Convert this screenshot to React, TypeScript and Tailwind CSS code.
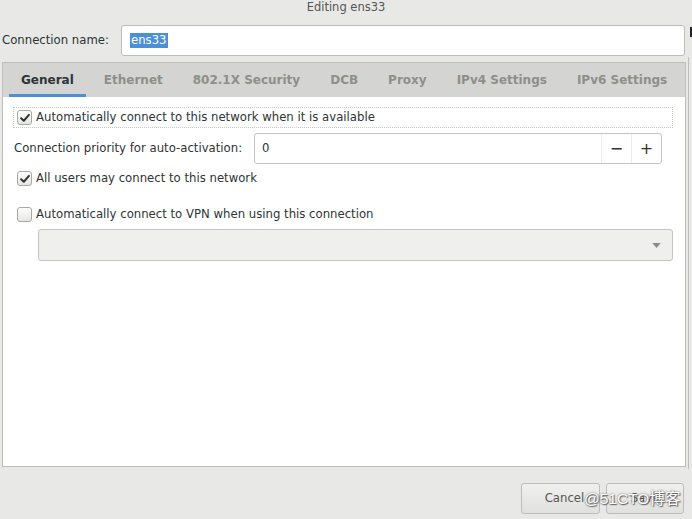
const tabs = ['General', 'Ethernet', '802.1X Security', 'DCB', 'Proxy', 'IPv4 Settings', 'IPv6 Settings'];

function CheckBox({ checked }: { checked: boolean }) {
    return (
        <span className="flex h-[15px] w-[15px] shrink-0 items-center justify-center rounded-[3px] border border-[#a8a8a5] bg-gradient-to-b from-[#fdfdfd] to-[#e6e6e4]">
            {checked && (
                <svg viewBox="0 0 14 14" className="h-[12px] w-[12px]">
                    <path d="M2.5 7.2 L5.6 10.2 L11.6 3.4" fill="none" stroke="#2e3436" strokeWidth="2.3" strokeLinecap="round" strokeLinejoin="round" />
                </svg>
            )}
        </span>
    );
}

export default function App() {
    return (
        <div className="relative flex h-[519px] w-[692px] flex-col overflow-hidden bg-[#e8e8e7] text-[11.7px] text-[#2e3436]" style={{ fontFamily: '"DejaVu Sans", "Noto Sans CJK SC", sans-serif' }}>
            <div className="flex h-[15px] items-center justify-center text-[11.5px] text-[#555753]">Editing ens33</div>

            <div className="mt-[10px] flex items-center pl-[2px] pr-[7px]">
                <span className="w-[119px]">Connection name:</span>
                <div className="flex h-[31px] flex-1 items-center rounded-[3px] border border-[#bcbcb9] bg-white pl-[8px]">
                    <span className="bg-[#4a90d9] px-px leading-[15px] text-white">ens33</span>
                </div>
            </div>

            <div className="ml-[2px] mr-[6px] mt-[6px] flex flex-1 flex-col border border-[#bdbdba]">
                <div className="flex h-[34px] items-stretch gap-[6px] bg-[#d4d4d2] pl-[6px]">
                    {tabs.map((t, i) => (
                        <div key={t} className={`flex items-center whitespace-nowrap border-b-[3px] px-[12px] pt-[2px] text-[12px] font-bold ${i === 0 ? 'border-[#4a90d9] text-[#2e3436]' : 'border-transparent text-[#8e8f8b]'}`}>
                            {t}
                        </div>
                    ))}
                </div>

                <div className="flex-1 bg-white pl-[10px] pr-[12px] pt-[10px]">
                    <div className="flex h-[21px] items-center gap-[4px] border border-dotted border-[#c5c5c2] pl-[3px]">
                        <CheckBox checked />
                        <span>Automatically connect to this network when it is available</span>
                    </div>

                    <div className="mt-[5px] flex items-center pl-px">
                        <span className="w-[240px]">Connection priority for auto-activation:</span>
                        <div className="mr-[11px] flex h-[31px] flex-1 rounded-[3px] border border-[#c4c4c1] bg-white">
                            <span className="flex flex-1 items-center pl-[7px]">0</span>
                            <span className="flex w-[30px] items-center justify-center border-l border-[#ececea] text-[16px]">−</span>
                            <span className="flex w-[30px] items-center justify-center border-l border-[#ececea] text-[16px]">+</span>
                        </div>
                    </div>

                    <div className="mt-[6px] flex items-center gap-[4px] pl-[4px]">
                        <CheckBox checked />
                        <span>All users may connect to this network</span>
                    </div>

                    <div className="mt-[18px] flex items-center gap-[4px] pl-[4px]">
                        <CheckBox checked={false} />
                        <span>Automatically connect to VPN when using this connection</span>
                    </div>

                    <div className="ml-[25px] mt-[6px] flex h-[32px] items-center justify-end rounded-[3px] border border-[#c4c4c1] bg-[#efefee] pr-[11px]">
                        <svg viewBox="0 0 10 6" className="h-[5px] w-[9px]"><path d="M0 0 L10 0 L5 6 Z" fill="#8a8b87" /></svg>
                    </div>
                </div>
            </div>

            <div className="flex h-[52px] items-start justify-end gap-[6px] pr-[8px] pt-[16px]">
                <button className="h-[31px] w-[79px] rounded-[3px] border border-[#bcbcb9] bg-gradient-to-b from-[#f0f0ef] to-[#e0e0de] pl-[8px] text-[#555753]">Cancel</button>
                <button className="h-[31px] w-[78px] rounded-[3px] border border-[#bcbcb9] bg-gradient-to-b from-[#f0f0ef] to-[#e0e0de] text-[#555753]">Save</button>
            </div>

            <span className="absolute left-[584px] top-[487px] whitespace-nowrap text-[15.5px] text-white" style={{ fontFamily: '"Liberation Sans", "Noto Sans CJK SC", sans-serif', textShadow: '0 0 2px #555, 1px 1px 1px #666' }}>@51CTO博客</span>
            <span className="absolute right-0 top-[27px] h-[10px] w-[2px] bg-[#222]" />
            <span className="absolute right-[3px] top-[57px] h-[412px] w-px bg-[#bdbdba]" />
        </div>
    );
}
